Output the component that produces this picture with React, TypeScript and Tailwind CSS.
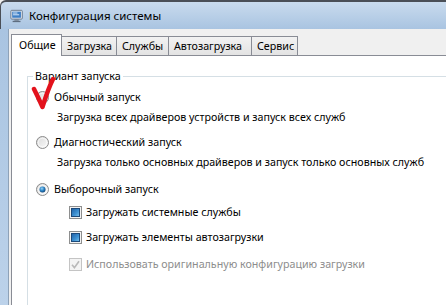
import React from "react";

const FONT = { fontFamily: '"Noto Sans", "Open Sans", sans-serif' };

function Radio({ checked }: { checked?: boolean }) {
  return (
    <svg width="13" height="13" viewBox="0 0 13 13" className="shrink-0">
      <defs>
        <linearGradient id="rb" x1="0" y1="0" x2="1" y2="1">
          <stop offset="0" stopColor="#d9d9d9" />
          <stop offset="1" stopColor="#fbfbfb" />
        </linearGradient>
        <radialGradient id="rd" cx="0.4" cy="0.35" r="0.7">
          <stop offset="0" stopColor="#9ad4f6" />
          <stop offset="0.5" stopColor="#2d86c8" />
          <stop offset="1" stopColor="#0d3f72" />
        </radialGradient>
      </defs>
      <circle cx="6.5" cy="6.5" r="6" fill="url(#rb)" stroke="#8b8b8b" strokeWidth="1" />
      <circle cx="6.5" cy="6.5" r="4.3" fill="none" stroke="#ffffff" strokeWidth="0.8" opacity="0.8" />
      {checked && <circle cx="6.5" cy="6.5" r="3" fill="url(#rd)" />}
    </svg>
  );
}

function Box({ disabled }: { disabled?: boolean }) {
  if (disabled) {
    return (
      <svg width="13" height="13" viewBox="0 0 13 13" className="shrink-0">
        <rect x="0.5" y="0.5" width="12" height="12" fill="#f4f4f4" stroke="#c4c4c4" />
        <path d="M3 6.8 L5.4 9.6 L10 3.2" fill="none" stroke="#b9b9b9" strokeWidth="1.6" />
      </svg>
    );
  }
  return (
    <svg width="13" height="13" viewBox="0 0 13 13" className="shrink-0">
      <defs>
        <linearGradient id="cbg" x1="0" y1="0" x2="1" y2="1">
          <stop offset="0" stopColor="#1d5fa5" />
          <stop offset="0.6" stopColor="#3f93d4" />
          <stop offset="1" stopColor="#7fc6ee" />
        </linearGradient>
      </defs>
      <rect x="0.5" y="0.5" width="12" height="12" fill="#f3f3f3" stroke="#8e8f8f" />
      <rect x="2.5" y="2.5" width="8" height="8" fill="url(#cbg)" stroke="#1c4a7a" />
    </svg>
  );
}

export default function App() {
  const tabs = [
    { label: "Загрузка", w: "w-[56px]" },
    { label: "Службы", w: "w-[53px]" },
    { label: "Автозагрузка", w: "w-[84px]" },
    { label: "Сервис", w: "w-[47px]" },
  ];
  return (
    <div
      className="w-[446px] h-[305px] overflow-hidden flex flex-col bg-[#f0f0f0] text-[10.7px] text-black whitespace-nowrap"
      style={FONT}
    >
      {/* title bar */}
      <div className="h-[29px] shrink-0 flex items-center border-t-2 border-l border-[#4a4f57] rounded-tl-[6px] bg-gradient-to-b from-[#c9dbee] to-[#a9c4e1] pl-[9px]">
        <svg width="14" height="14" viewBox="0 0 16 16" className="mr-[5px]">
          <rect x="1" y="1.5" width="13" height="10" rx="1" fill="#e8eef5" stroke="#5d6d80" />
          <rect x="2.5" y="3" width="10" height="7" fill="#3f7fc4" />
          <rect x="3.5" y="4" width="5" height="1.2" fill="#cfe3f7" />
          <rect x="3.5" y="6" width="7" height="1.2" fill="#cfe3f7" />
          <rect x="5" y="11.5" width="5" height="2" fill="#7d8a99" />
          <rect x="3" y="13.5" width="9" height="1.5" fill="#5d6d80" />
        </svg>
        <span className="text-[11.5px] text-black leading-none">Конфигурация системы</span>
      </div>

      <div className="flex flex-1 min-h-0">
        {/* left frame */}
        <div className="w-[9px] shrink-0 bg-gradient-to-b from-[#a9c4e1] to-[#bcd2ea] border-r border-[#8ea2b8]" />
        <div className="flex-1 flex flex-col pl-[2px] pt-[5px] min-w-0">
          {/* tabs */}
          <div className="flex items-end h-[21px] shrink-0">
            <div className="w-[51px] h-[22px] bg-white border border-b-0 border-[#898c95] flex items-center pl-[7px] relative z-10 -mb-px">
              Общие
            </div>
            {tabs.map((t) => (
              <div
                key={t.label}
                className={`${t.w} h-[19px] -ml-px border border-b-0 border-[#898c95] bg-gradient-to-b from-[#f2f2f2] to-[#e3e3e3] flex items-center pl-[5px]`}
              >
                {t.label}
              </div>
            ))}
          </div>
          {/* panel */}
          <div className="flex-1 bg-white border-t border-l border-[#898c95] pl-[15px] pt-[20px]">
            <div className="relative border-t border-l border-[#d5dfe5] h-full">
              <span className="absolute -top-[9px] left-[5px] bg-white px-[2px] leading-[16px]">
                Вариант запуска
              </span>
              <div className="flex flex-col pt-[12px] pl-[8px] leading-[16px]">
                <div className="flex items-center h-[16px] gap-[5px]">
                  <Radio />
                  <span>Обычный запуск</span>
                </div>
                <div className="h-[16px] mt-[4px] pl-[21px]">
                  Загрузка всех драйверов устройств и запуск всех служб
                </div>
                <div className="flex items-center h-[16px] gap-[5px] mt-[9px]">
                  <Radio />
                  <span>Диагностический запуск</span>
                </div>
                <div className="h-[16px] mt-[4px] pl-[21px]">
                  Загрузка только основных драйверов и запуск только основных служб
                </div>
                <div className="flex items-center h-[16px] gap-[5px] mt-[11px]">
                  <Radio checked />
                  <span>Выборочный запуск</span>
                </div>
                <div className="flex items-center h-[16px] gap-[4px] mt-[7px] pl-[33px]">
                  <Box />
                  <span>Загружать системные службы</span>
                </div>
                <div className="flex items-center h-[16px] gap-[4px] mt-[9px] pl-[33px]">
                  <Box />
                  <span>Загружать элементы автозагрузки</span>
                </div>
                <div className="flex items-center h-[16px] gap-[4px] mt-[11px] pl-[33px] text-[#8d8d8d]">
                  <Box disabled />
                  <span>Использовать оригинальную конфигурацию загрузки</span>
                </div>
              </div>
              {/* red hand-drawn check mark annotation */}
              <svg
                width="30"
                height="36"
                viewBox="0 0 30 36"
                className="absolute left-[2px] top-[0px] pointer-events-none"
              >
                <path
                  d="M4 12 C6 16 9 22 12.5 30 C15 22 18 12 23 2"
                  fill="none"
                  stroke="#e3121c"
                  strokeWidth="4.5"
                  strokeLinecap="round"
                  strokeLinejoin="round"
                />
              </svg>
            </div>
          </div>
        </div>
      </div>
    </div>
  );
}
